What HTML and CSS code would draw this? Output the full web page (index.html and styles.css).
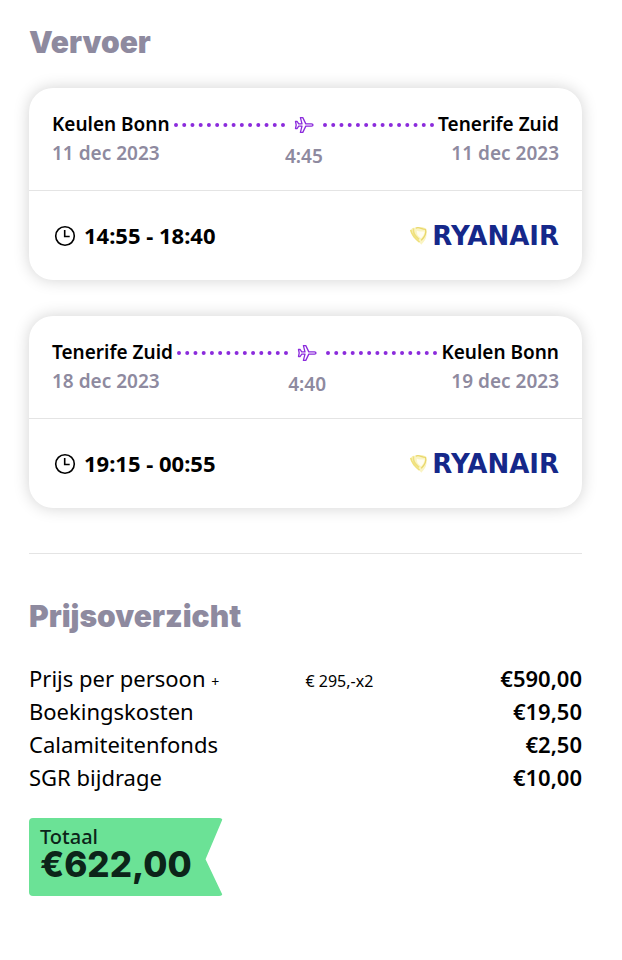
FILE: index.html
```html
<!DOCTYPE html>
<html lang="nl">
<head>
<meta charset="utf-8">
<meta name="viewport" content="width=device-width, initial-scale=1">
<title>Vervoer en prijsoverzicht</title>
<link rel="stylesheet" href="styles.css">
</head>
<body>
<svg class="sprite" aria-hidden="true">
  <symbol id="plane" viewBox="0 0 20 20">
    <path d="M1.500 6.500h1.700l1.500 2.400h3.300L6.400 2.600h2.400l3 6.300h5.700c.8 0 1.500.5 1.500 1.100s-.7 1.100-1.500 1.100h-5.700l-3 6.300H6.400L8 11.100H4.700l-1.500 2.400H1.500L2.200 10z" fill="none" stroke="currentColor" stroke-width="1.300" stroke-linejoin="round"/>
  </symbol>
  <symbol id="clock" viewBox="0 0 22 22">
    <circle cx="11" cy="11" r="9.300" fill="none" stroke="currentColor" stroke-width="1.600"/>
    <path d="M10.700 5v6.500h5" fill="none" stroke="currentColor" stroke-width="1.600"/>
  </symbol>
  <symbol id="harp" viewBox="0 0 18 20">
    <path d="M1 5C3 1 7 3 10 2c3-1 6 1 6 5 0 5-2 8-5 11C9 14 3 13 1 5z" fill="#faf4c4"/>
    <path d="M1.500 4.500c1 5 4 8 8 11M4 3c-1 6 3 8 5 10" fill="none" stroke="#efe07c" stroke-width="1.500"/>
    <path d="M6 3c3-2 5 1 9 1 1 4-1 7-4 10" fill="none" stroke="#e9d76a" stroke-width="1.200"/>
    <path d="M7 5c0 4 1 5 4 7 2-2 3-4 3-6-3 0-5 0-7-1z" fill="#fffdf0"/>
  </symbol>
</svg>
<main class="page">
  <section>
    <h2 class="heading">Vervoer</h2>
    <article class="card">
      <div class="route">
        <div class="stop"><span class="place">Keulen Bonn</span><span class="muted">11 dec 2023</span></div>
        <div class="path">
          <div class="track"><svg class="dots" height="6" aria-hidden="true"><line x1="3" y1="3" x2="100%" y2="3"/></svg><svg class="plane" aria-hidden="true"><use href="#plane"/></svg><svg class="dots" height="6" aria-hidden="true"><line x1="3" y1="3" x2="100%" y2="3"/></svg></div>
          <span class="muted">4:45</span>
        </div>
        <div class="stop end"><span class="place">Tenerife Zuid</span><span class="muted">11 dec 2023</span></div>
      </div>
      <div class="flight">
        <span class="time"><svg class="clock" aria-hidden="true"><use href="#clock"/></svg>14:55 - 18:40</span>
        <span class="airline"><svg class="harp" aria-hidden="true"><use href="#harp"/></svg>RYANAIR</span>
      </div>
    </article>
    <article class="card">
      <div class="route">
        <div class="stop"><span class="place">Tenerife Zuid</span><span class="muted">18 dec 2023</span></div>
        <div class="path">
          <div class="track"><svg class="dots" height="6" aria-hidden="true"><line x1="3" y1="3" x2="100%" y2="3"/></svg><svg class="plane" aria-hidden="true"><use href="#plane"/></svg><svg class="dots" height="6" aria-hidden="true"><line x1="3" y1="3" x2="100%" y2="3"/></svg></div>
          <span class="muted">4:40</span>
        </div>
        <div class="stop end"><span class="place">Keulen Bonn</span><span class="muted">19 dec 2023</span></div>
      </div>
      <div class="flight">
        <span class="time"><svg class="clock" aria-hidden="true"><use href="#clock"/></svg>19:15 - 00:55</span>
        <span class="airline"><svg class="harp" aria-hidden="true"><use href="#harp"/></svg>RYANAIR</span>
      </div>
    </article>
  </section>
  <section class="pricing">
    <h2 class="heading">Prijsoverzicht</h2>
    <table class="prices">
      <tbody>
        <tr><th scope="row">Prijs per persoon <small class="plus">+</small></th><td class="detail">€ 295,-x2</td><td class="amount">€590,00</td></tr>
        <tr><th scope="row">Boekingskosten</th><td></td><td class="amount">€19,50</td></tr>
        <tr><th scope="row">Calamiteitenfonds</th><td></td><td class="amount">€2,50</td></tr>
        <tr><th scope="row">SGR bijdrage</th><td></td><td class="amount">€10,00</td></tr>
      </tbody>
    </table>
    <div class="total"><span class="total-label">Totaal</span><strong class="total-price">€622,00</strong></div>
  </section>
</main>
</body>
</html>
```
FILE: styles.css
```css
* { box-sizing: border-box; }
body { margin: 0; background: #fff; color: #000; font-family: "Noto Sans", sans-serif; }
.sprite { display: none; }
.page { padding: 22px 40px 48px 29px; }
.heading { margin: 0; font: 900 30px/40px Inter, sans-serif; color: #8e8a9f; }

.card { margin-top: 36px; border-radius: 24px; background: #fff; box-shadow: 0 0 16px rgba(0, 0, 0, .18); }
.heading + .card { margin-top: 26px; }
.route { display: flex; gap: 3px; padding: 22px 23px 19px; border-bottom: 1px solid #e4e4e4; }
.stop { display: flex; flex-direction: column; white-space: nowrap; }
.end { text-align: right; }
.place, .muted { font-size: 19px; line-height: 29px; font-weight: 600; }
.muted { color: #8e8a9f; }
.path { flex: 1; min-width: 0; display: flex; flex-direction: column; align-items: center; gap: 3px; }
.track { display: flex; align-items: center; gap: 8px; width: 100%; height: 29px; color: #8b2bdc; }
.dots { flex: 1; min-width: 0; }
.dots line { stroke: currentColor; stroke-width: 4; stroke-linecap: round; stroke-dasharray: 0 8.230; }
.plane { width: 20px; height: 20px; flex: none; }
.flight { display: flex; align-items: center; justify-content: space-between; padding: 24px 23px; }
.time { display: flex; align-items: center; gap: 8px; font-size: 22px; line-height: 41px; font-weight: 700; }
.clock { width: 22px; height: 22px; margin-left: 2px; }
.airline { display: flex; align-items: center; gap: 3px; font: 700 26px/32px "DejaVu Sans", sans-serif; color: #15288a; }
.harp { width: 20px; height: 22px; }

.pricing { margin-top: 45px; padding-top: 42px; border-top: 1px solid #e4e4e4; }
.prices { width: 100%; margin-top: 26px; border-collapse: collapse; table-layout: fixed; font-size: 22px; line-height: 33px; }
.prices th, .prices td { padding: 0; text-align: left; vertical-align: baseline; font-weight: 400; }
.prices th { width: 50%; white-space: nowrap; }
.prices .detail { font-size: 16px; line-height: 20px; }
.prices .amount { text-align: right; font-weight: 600; }
.plus { font-size: 14px; line-height: 1; }
.total { display: flex; flex-direction: column; width: 194px; margin-top: 24px; padding: 7px 11px 17px; border-radius: 4px; background: #6be296; color: #0c2419; clip-path: polygon(0 0, 100% 0, 91% 53%, 100% 100%, 0 100%); }
.total-label { font-size: 20px; line-height: 24px; font-weight: 500; }
.total-price { font: 800 35px/30px Inter, sans-serif; }
```
